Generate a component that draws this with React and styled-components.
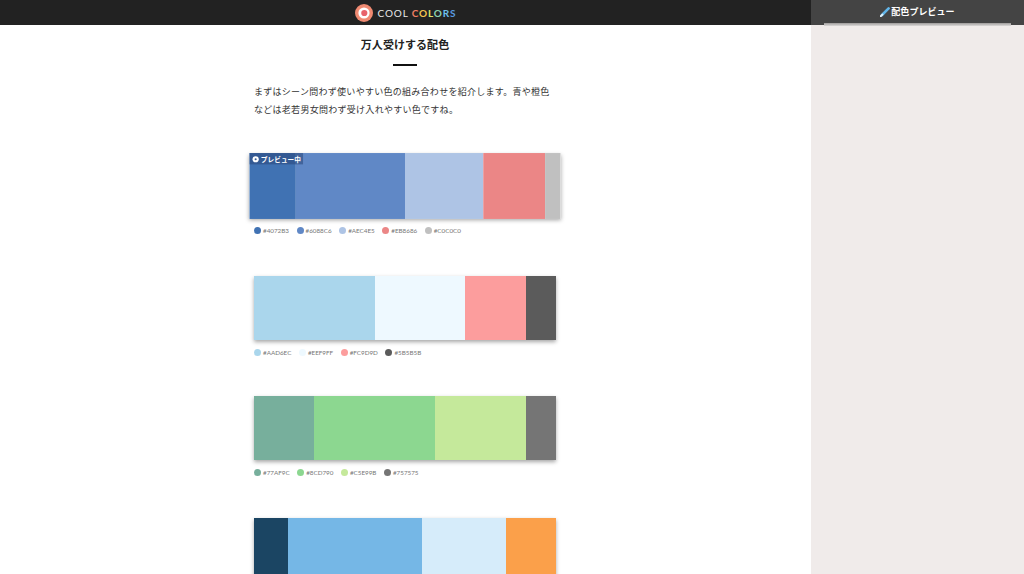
import React from 'react';
import styled, { createGlobalStyle } from 'styled-components';

const Global = createGlobalStyle`
    html, body {
        margin: 0;
        height: 100%;
        overflow: hidden;
        background: #fff;
    }
    body {
        font-family: "Noto Sans CJK JP", "Noto Sans", sans-serif;
    }
`;

const Page = styled.div`
    display: grid;
    grid-template-columns: 811px 213px;
    height: 574px;
    overflow: hidden;
`;

const Main = styled.main`
    display: flex;
    flex-direction: column;
    min-width: 0;
`;

const Header = styled.header`
    flex: none;
    height: 25px;
    background: #222;
    display: flex;
    justify-content: center;
    align-items: center;
    gap: 5px;
`;

const LogoText = styled.span`
    font-family: Lato, sans-serif;
    font-size: 10px;
    letter-spacing: 0.85px;
    color: #e8e8e8;
    white-space: nowrap;
`;

const Letter = styled.span`
    font-weight: 700;
    color: ${(p) => p.$color};
`;

const Content = styled.div`
    width: 302px;
    margin-left: 254px;
    display: flex;
    flex-direction: column;
`;

const Title = styled.h2`
    margin: 12px 0 0;
    font-size: 11px;
    line-height: 15px;
    font-weight: 700;
    letter-spacing: 0.05px;
    text-align: center;
    color: #222;

    &::after {
        content: '';
        display: block;
        width: 24px;
        height: 2px;
        margin: 12px auto 0;
        background: #111;
    }
`;

const Lead = styled.p`
    margin: 17px 0 0;
    font-size: 9px;
    line-height: 17.6px;
    letter-spacing: 0.28px;
    color: #333;
`;

const Section = styled.section`
    margin-top: ${(p) => p.$top}px;
`;

const PaletteBar = styled.div`
    position: relative;
    display: flex;
    height: 64px;
    box-shadow: 0 2px 4px rgba(0, 0, 0, 0.35);
    transform: ${(p) => (p.$active ? 'scale(1.03)' : 'none')};
`;

const Swatch = styled.div`
    flex: ${(p) => p.$size} 0 0;
    background: ${(p) => p.$color};
`;

const Badge = styled.span`
    position: absolute;
    top: 0;
    left: 0;
    height: 11px;
    padding: 0 2px 0 3px;
    display: flex;
    align-items: center;
    gap: 2px;
    background: rgba(40, 70, 120, 0.55);
    color: #fff;
    font-size: 6.5px;
    font-weight: 700;
    white-space: nowrap;
`;

const BadgeDot = styled.i`
    width: 6px;
    height: 6px;
    border-radius: 50%;
    background: #fff;
    display: flex;
    align-items: center;
    justify-content: center;

    &::after {
        content: '';
        width: 2px;
        height: 2px;
        border-radius: 50%;
        background: #3c5f95;
    }
`;

const Legend = styled.ul`
    list-style: none;
    margin: 8px 0 0;
    padding: 0;
    display: flex;
    gap: 7.5px;
`;

const LegendItem = styled.li`
    display: flex;
    align-items: center;
    gap: 2px;
    height: 9px;
    font-family: Lato, sans-serif;
    font-size: 6.3px;
    color: #777;
`;

const Dot = styled.span`
    width: 7px;
    height: 7px;
    border-radius: 50%;
    background: ${(p) => p.$color};
`;

const Side = styled.aside`
    background: #f0ebea;
    display: flex;
    flex-direction: column;
`;

const SideHeader = styled.div`
    box-sizing: border-box;
    height: 25px;
    padding-bottom: 2px;
    background: #444;
    display: flex;
    justify-content: center;
    align-items: center;
    gap: 1px;
    color: #fff;
    font-size: 9px;
    font-weight: 700;
    letter-spacing: 0.05px;
`;

const SidePanel = styled.div`
    margin: -2px 13px 0;
    height: 3px;
    background: linear-gradient(#9c9a99, #dcd9d8);
`;

const palettes = [
    {
        top: 35.8,
        active: true,
        colors: [['#4072B3', 15], ['#6088C6', 35], ['#AEC4E5', 25], ['#EB8686', 20], ['#C0C0C0', 5]],
    },
    {
        top: 41,
        colors: [['#AAD6EC', 40], ['#EEF9FF', 30], ['#FC9D9D', 20], ['#5B5B5B', 10]],
    },
    {
        top: 39,
        colors: [['#77AF9C', 20], ['#8CD790', 40], ['#C5E99B', 30], ['#757575', 10]],
    },
    {
        top: 41,
        colors: [['#1B4563', 2], ['#75B7E6', 8], ['#D6ECFA', 5], ['#FBA04A', 3]],
    },
];

const Logo = () => (
    <svg width="18" height="18" viewBox="0 0 18 18">
        <circle cx="9" cy="9" r="9" fill="#ef8a72" />
        <circle cx="9" cy="9" r="5.6" fill="#fff" />
        <circle cx="9.3" cy="9" r="3.1" fill="#e8636b" />
    </svg>
);

const Brush = () => (
    <svg width="10" height="10" viewBox="0 0 10 10">
        <path d="M2 8 L8.6 1.4" stroke="#62b6ea" strokeWidth="2.6" strokeLinecap="round" />
        <path d="M0.6 9.4 L2.4 7.6" stroke="#dff1fb" strokeWidth="2" strokeLinecap="round" />
    </svg>
);

const App = () => (
    <Page>
        <Global />
        <Main>
            <Header>
                <Logo />
                <LogoText>
                    COOL{' '}
                    <Letter $color="#ef7d63">C</Letter>
                    <Letter $color="#f2c14e">O</Letter>
                    <Letter $color="#dfe06a">L</Letter>
                    <Letter $color="#8cd0b0">O</Letter>
                    <Letter $color="#6cc0ee">R</Letter>
                    <Letter $color="#5a9be0">S</Letter>
                </LogoText>
            </Header>
            <Content>
                <Title>万人受けする配色</Title>
                <Lead>
                    まずはシーン問わず使いやすい色の組み合わせを紹介します。青や橙色などは老若男女問わず受け入れやすい色ですね。
                </Lead>
                {palettes.map((palette) => (
                    <Section key={palette.colors[0][0]} $top={palette.top}>
                        <PaletteBar $active={palette.active}>
                            {palette.colors.map(([color, size]) => (
                                <Swatch key={color} $color={color} $size={size} />
                            ))}
                            {palette.active && (
                                <Badge>
                                    <BadgeDot />
                                    プレビュー中
                                </Badge>
                            )}
                        </PaletteBar>
                        <Legend>
                            {palette.colors.map(([color]) => (
                                <LegendItem key={color}>
                                    <Dot $color={color} />
                                    {color}
                                </LegendItem>
                            ))}
                        </Legend>
                    </Section>
                ))}
            </Content>
        </Main>
        <Side>
            <SideHeader>
                <Brush />
                配色プレビュー
            </SideHeader>
            <SidePanel />
        </Side>
    </Page>
);

export default App;
